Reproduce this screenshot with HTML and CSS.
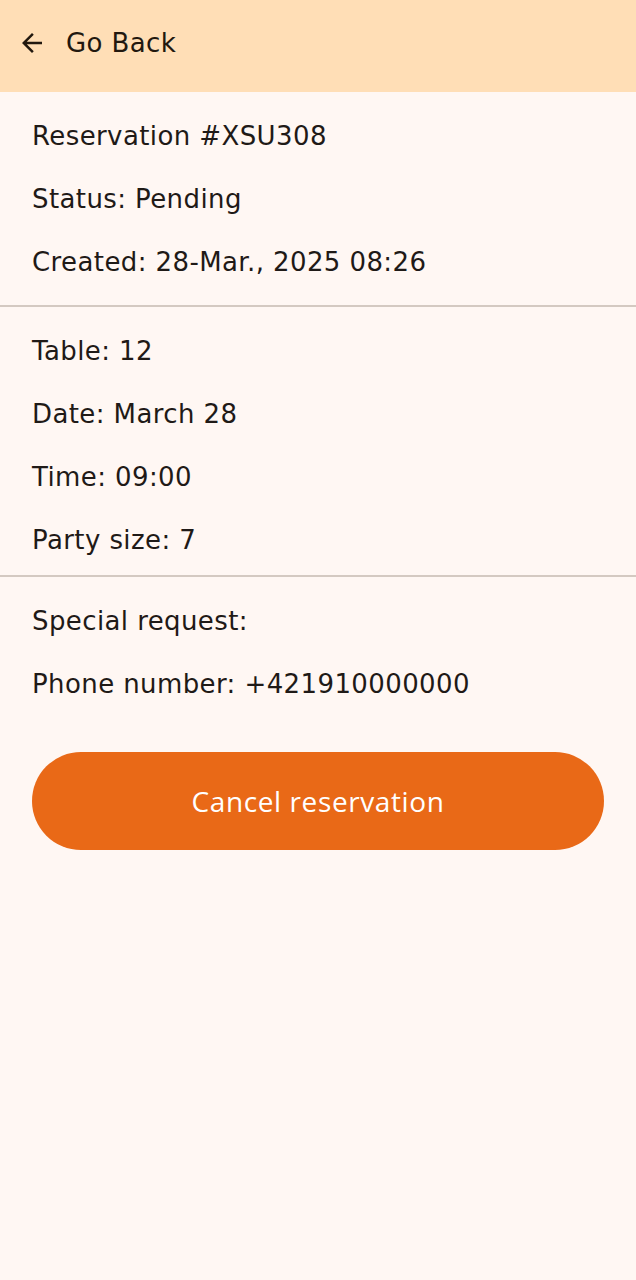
FILE: index.html
```html
<!DOCTYPE html>
<html>
<head>
<meta charset="utf-8">
<link rel="stylesheet" href="styles.css">
</head>
<body>
<header class="topbar">
  <svg class="back-icon" width="30" height="30" viewBox="0 0 24 24"><path d="M20 11H7.83l5.59-5.59L12 4l-8 8 8 8 1.41-1.41L7.83 13H20v-2z" fill="#22180f"/></svg>
  <span class="back-label">Go Back</span>
</header>
<main class="content">
  <section class="group first">
    <div class="line">Reservation #XSU308</div>
    <div class="line">Status: Pending</div>
    <div class="line">Created: 28-Mar., 2025 08:26</div>
  </section>
  <section class="group second">
    <div class="line">Table: 12</div>
    <div class="line">Date: March 28</div>
    <div class="line">Time: 09:00</div>
    <div class="line">Party size: 7</div>
  </section>
  <section class="group last">
    <div class="line">Special request:</div>
    <div class="line">Phone number: +421910000000</div>
  </section>
  <div class="actions">
    <button class="cancel-btn">Cancel reservation</button>
  </div>
</main>
</body>
</html>
```
FILE: styles.css
```css
html, body {
  margin: 0;
  padding: 0;
  background: #fff7f3;
}
body {
  font-family: "DejaVu Sans", sans-serif;
  color: #1f1a17;
  min-height: 1280px;
}
.topbar {
  height: 92px;
  background: #ffdeb6;
  display: flex;
  align-items: center;
  padding-left: 17px;
  padding-bottom: 6px;
  box-sizing: border-box;
}
.back-icon {
  display: block;
}
.back-label {
  margin-left: 19px;
  font-size: 26px;
  letter-spacing: 0.4px;
  color: #22180f;
}
.content {
  padding: 0 32px;
}
.group {
  padding: 12px 32px;
  border-bottom: 2px solid #d4c9c1;
  margin: 0 -32px;
}
.group.second {
  padding-bottom: 4px;
}
.group.last {
  border-bottom: none;
}
.line {
  height: 63px;
  display: flex;
  align-items: center;
  font-size: 26px;
  letter-spacing: 0.4px;
}
.actions {
  padding-top: 25px;
}
.cancel-btn {
  display: block;
  width: 100%;
  height: 98px;
  border: none;
  border-radius: 49px;
  background: #e96917;
  color: #fff;
  font-family: "Open Sans", sans-serif;
  font-size: 28px;
  letter-spacing: 0.6px;
}
```
